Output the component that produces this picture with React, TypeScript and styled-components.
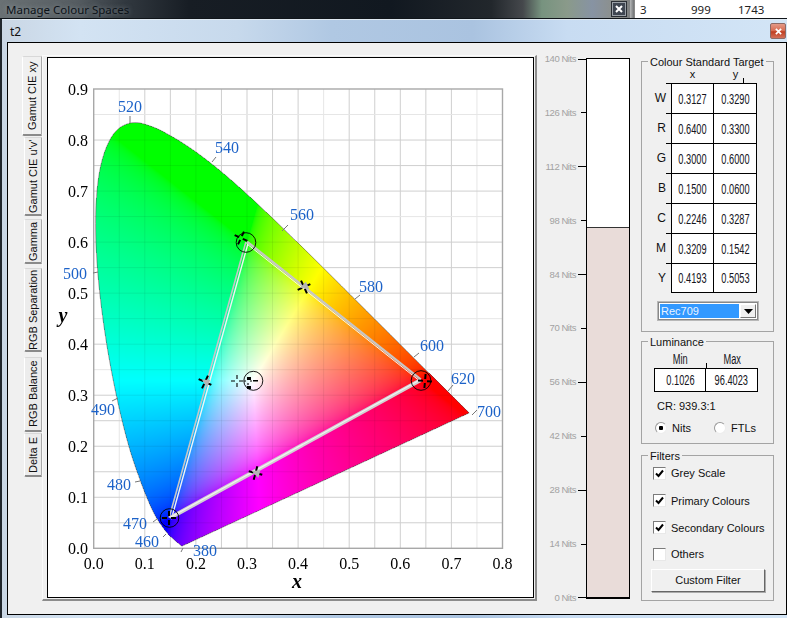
import React, { useEffect, useRef } from "react";
import styled, { createGlobalStyle } from "styled-components";

const Global = createGlobalStyle`
  html, body { margin: 0; padding: 0; background: #1a1f26; }
  body { font-family: "Liberation Sans", "Noto Sans", sans-serif; font-size: 11px; color: #111; }
`;

const Page = styled.div`
  width: 787px; height: 618px; overflow: hidden; background: #20262c;
  display: flex; flex-direction: column;
`;
const TopStrip = styled.div`
  height: 18px; display: flex; flex: none; border-bottom: 1px solid #10151a;
`;
const TopGlass = styled.div`
  width: 630px; display: flex; align-items: center; padding: 0 4px 0 6px; box-sizing: border-box;
  background: linear-gradient(90deg, #6a7174 0%, #565d62 12%, #31383f 20%, #171d24 30%, #111820 62%, #22272c 78%, #45484c 83%, #77937f 86%, #8a9a8a 90%, #8793a3 94%, #8d8f88 98%, #7e8080 100%);
`;
const TopTitle = styled.span`
  flex: 1; font-family: "Noto Sans", sans-serif; font-size: 11.5px; color: #0c1218; text-shadow: 0 0 5px rgba(190,200,205,.55);
`;
const MiniClose = styled.div`
  width: 14px; height: 14px; box-sizing: border-box; border: 1px solid #9aa0a6; background: #3f4650;
  display: flex; align-items: center; justify-content: center; box-shadow: 0 0 0 1px #2a2e33;
`;
const TopGap = styled.div`
  width: 4px; background: linear-gradient(90deg, #b5b7b8, #6f7274);
`;
const ListFragment = styled.div`
  flex: 1; background: #fff; display: grid; grid-template-columns: 51px 47px 1fr; padding-left: 5px;
  font-family: "Noto Sans", sans-serif; font-size: 11.5px; line-height: 20px; border-left: 1px solid #888; color: #222;
`;
const ListCell = styled.span`
  text-align: left; height: 18px; overflow: hidden;
`;
const Window = styled.div`
  margin-left: 2px; flex: 1; min-height: 0; display: flex; flex-direction: column; box-sizing: border-box;
  padding: 0 0 3px 5px; border-top: 1px solid #dfe9f2;
  background: linear-gradient(90deg, #c9d6e4 0%, #d3e3f3 10%, #c7d9ec 30%, #b0c8e3 42%, #aac3e0 60%, #c8dcf2 72%, #d3e5f6 100%);
`;
const TitleBar = styled.div`
  height: 22px; flex: none; display: flex; align-items: center; justify-content: space-between;
  padding: 0 1px 0 3px;
`;
const TitleText = styled.span`
  font-family: "Noto Sans", sans-serif; font-size: 12px; color: #111;
`;
const RedClose = styled.div`
  width: 16px; height: 16px; box-sizing: border-box; border: 1px solid #8d6a66; border-radius: 2px;
  background: linear-gradient(180deg, #e39a88 0%, #d86a50 50%, #bf3d20 55%, #d4705a 100%);
  display: flex; align-items: center; justify-content: center;
`;
const Client = styled.div`
  flex: 1; min-height: 0; box-sizing: border-box; border: 1px solid #000; background: #f0f0f0;
  display: flex; align-items: flex-start; padding: 13px 0 0 14px;
`;
const Tabs = styled.div`
  width: 20px; flex: none; display: flex; flex-direction: column;
`;
const Tab = styled.div<{ $h: number; $gap: number; $active?: boolean }>`
  height: ${(p) => p.$h}px; margin-bottom: ${(p) => p.$gap}px; box-sizing: border-box;
  writing-mode: vertical-rl; transform: rotate(180deg);
  display: flex; align-items: center; justify-content: center;
  font-size: 11px; white-space: nowrap; line-height: 20px;
  background: ${(p) => (p.$active ? "#f0f0f0" : "#ececec")};
  border-top: 2px solid #8a8a8a;
  border-left: 1px solid #a8a8a8;
  border-bottom: 1px solid #d8d8d8;
  border-right: 1px solid #fff;
  border-radius: 0 2px 2px 0;
  margin-left: ${(p) => (p.$active ? 0 : 2)}px;
  width: ${(p) => (p.$active ? 20 : 18)}px;
`;
const TabPane = styled.div`
  width: 495px; height: 546px; flex: none; box-sizing: border-box; margin-top: -1px;
  border-top: 1px solid #fafafa; border-left: 1px solid #fafafa;
  border-right: 2px solid #8c8c8c; border-bottom: 2px solid #8c8c8c;
  padding: 1px 1px 1px 4px;
`;
const ChartFrame = styled.div`
  position: relative; width: 487px; height: 541px; box-sizing: border-box;
  border: 1px solid #000; background: #fff;
`;
const GamutCanvas = styled.canvas`
  position: absolute; left: 0; top: 0; display: block;
`;
const ChartSvg = styled.svg`
  position: absolute; left: 0; top: 0; display: block;
`;
const TickText = styled.text`
  font-family: "Liberation Serif", serif; font-size: 16px; fill: #000;
`;
const WaveText = styled.text`
  font-family: "Liberation Serif", serif; font-size: 16px; fill: #1c62c8; text-anchor: middle;
`;
const AxisName = styled.text`
  font-family: "Liberation Serif", serif; font-size: 20px; font-weight: bold; font-style: italic; fill: #000; text-anchor: middle;
`;
const Scale = styled.div`
  width: 49px; height: 551px; flex: none; margin-top: -3px; display: flex; flex-direction: column; justify-content: space-between;
`;
const ScaleRow = styled.div`
  height: 12px; display: flex; align-items: center; justify-content: flex-end;
`;
const ScaleLabel = styled.span`
  font-family: "Liberation Sans", sans-serif; font-size: 9.5px; letter-spacing: -.45px; color: #a2a2a2; white-space: nowrap;
  line-height: 12px;
`;
const ScaleTick = styled.span<{ $long: boolean }>`
  width: ${(p) => (p.$long ? 8 : 5)}px; margin-left: ${(p) => (p.$long ? 2 : 5)}px; height: 1px; background: #000; flex: none;
`;
const Bar = styled.div`
  width: 44px; height: 541px; flex: none; margin-top: 2px; box-sizing: border-box;
  border: 1px solid #000; border-bottom-width: 2px; background: #fff;
  display: flex; flex-direction: column; justify-content: flex-end;
`;
const BarFill = styled.div`
  background: #e9dcd9; border-top: 1px solid #333; box-sizing: border-box;
`;
const Side = styled.div`
  width: 133px; flex: none; margin: 5px 0 0 11px; display: flex; flex-direction: column;
`;
const Group = styled.div<{ $h: number; $mb: number }>`
  position: relative; box-sizing: border-box; height: ${(p) => p.$h}px; margin-bottom: ${(p) => p.$mb}px;
  border: 1px solid #a4a4a4;
`;
const Legend = styled.span`
  position: absolute; left: 6px; top: -7px; padding: 0 2px; background: #f0f0f0; font-size: 11px; line-height: 14px; white-space: nowrap;
`;
const ColHeads = styled.div`
  display: flex; margin: 6px 0 0 29px; height: 15px; position: relative;
`;
const ColHead = styled.span`
  width: 43px; text-align: center; font-size: 11px; line-height: 12px;
`;
const Notch = styled.span<{ $left: number }>`
  position: absolute; left: ${(p) => p.$left}px; bottom: 0; width: 1px; height: 5px; background: #000;
`;
const Row = styled.div`
  display: flex; height: 30px; align-items: stretch;
`;
const RowLabel = styled.span`
  position: relative; width: 29px; text-align: right; padding-right: 5px; box-sizing: border-box;
  font-size: 12px; line-height: 30px;
`;
const RowNotch = styled.span`
  position: absolute; right: 0; top: 0; width: 5px; height: 1px; background: #000;
`;
const Cell = styled.div<{ $w: number; $first?: boolean; $bottom?: boolean }>`
  width: ${(p) => p.$w}px; box-sizing: border-box; background: #fff;
  border: 0 solid #000;
  border-top-width: 1px;
  border-right-width: 1px;
  border-left-width: ${(p) => (p.$first ? 1 : 0)}px;
  border-bottom-width: ${(p) => (p.$bottom ? 1 : 0)}px;
  display: flex; align-items: center; justify-content: center;
`;
const Num = styled.span`
  display: inline-block; font-size: 14px; transform: scaleX(.66); color: #15151c;
`;
const Select = styled.div`
  margin: 8px 0 0 15px; width: 102px; height: 20px; box-sizing: border-box; padding: 2px;
  background: #fff; border: 1px solid #b8b8b8; box-shadow: inset 0 0 0 1px #888; display: flex;
`;
const SelectValue = styled.span`
  flex: 1; background: #3399ff; color: #e9f3ff; font-size: 11px; line-height: 14px; padding: 0 1px; margin: 0 1px 0 0;
`;
const SelectButton = styled.span`
  width: 16px; background: #f0f0f0; border-right: 1px solid #777; border-bottom: 1px solid #777; border-left: 1px solid #fff; border-top: 1px solid #fff;
  box-sizing: border-box; display: flex; align-items: center; justify-content: center;
`;
const LumHeads = styled.div`
  position: relative; display: flex; margin: 11px 0 0 12px; height: 15px;
`;
const LumHead = styled.span`
  display: block; width: 52px; text-align: center; line-height: 12px; color: #1a1a22;
`;
const LumRow = styled.div`
  display: flex; height: 24px; margin-left: 12px;
`;
const CrText = styled.div`
  margin: 7px 0 0 15px; font-size: 11px; line-height: 14px;
`;
const RadioRow = styled.div`
  display: flex; margin: 8px 0 0 13px;
`;
const RadioItem = styled.label<{ $w: number }>`
  width: ${(p) => p.$w}px; display: flex; align-items: center; gap: 5px; font-size: 11px; line-height: 14px;
`;
const Radio = styled.span<{ $on?: boolean }>`
  width: 12px; height: 12px; box-sizing: border-box; border-radius: 50%; border: 1px solid #9a9a9a; border-right-color: #eee; border-bottom-color: #eee;
  background: radial-gradient(circle, ${(p) => (p.$on ? "#000 0 2px, #fff 2.5px" : "#fff 0 100%")});
  flex: none;
`;
const FilterList = styled.div`
  padding: 3px 0 0 11px;
`;
const FilterRow = styled.label<{ $h: number }>`
  display: flex; align-items: center; gap: 5px; height: ${(p) => p.$h}px; font-size: 11px; white-space: nowrap;
`;
const Check = styled.span`
  width: 13px; height: 13px; flex: none; box-sizing: border-box; background: #fff;
  border: 1px solid #7b7b7b; border-right-color: #e8e8e8; border-bottom-color: #e8e8e8;
  display: flex; align-items: center; justify-content: center;
`;
const FilterButton = styled.div`
  margin: 2px 0 0 9px; width: 114px; height: 23px; box-sizing: border-box; background: #f0f0f0; text-align: center;
  border: 1px solid; border-color: #fff #666 #666 #fff; box-shadow: 1px 1px 0 #aaa;
  font-size: 11px; line-height: 20px;
`;

type P = [number, number];
const LOCUS: P[] = [[.1741,.005],[.1733,.0048],[.1714,.0051],[.1689,.0069],[.1644,.0109],[.1566,.0177],[.144,.0297],[.1241,.0578],[.1096,.0868],[.0913,.1327],[.0687,.2007],[.0454,.295],[.0235,.4127],[.0082,.5384],[.0039,.6548],[.0139,.7502],[.0389,.812],[.0743,.8338],[.1142,.8262],[.1547,.8059],[.1929,.7816],[.2296,.7543],[.2658,.7243],[.3016,.6923],[.3373,.6589],[.3731,.6245],[.4087,.5896],[.4441,.5547],[.4788,.5202],[.5125,.4866],[.5448,.4544],[.5752,.4242],[.6029,.3965],[.627,.3725],[.6482,.3514],[.6658,.334],[.6915,.3083],[.7079,.292],[.719,.2809],[.7347,.2653]];
const X = (x: number) => 93.7 + 511 * x;
const Y = (y: number) => 548.3 - 510.3 * y;

const smooth = (pts: P[]): P[] => {
  const out: P[] = [];
  for (let i = 0; i < pts.length - 1; i++) {
    const p0 = pts[Math.max(i - 1, 0)];
    const p1 = pts[i];
    const p2 = pts[i + 1];
    const p3 = pts[Math.min(i + 2, pts.length - 1)];
    for (let s = 0; s < 6; s++) {
      const t = s / 6;
      const f = (a: number, b: number, c: number, d: number) =>
        0.5 * (2 * b + (c - a) * t + (2 * a - 5 * b + 4 * c - d) * t * t + (3 * b - a - 3 * c + d) * t * t * t);
      out.push([f(p0[0], p1[0], p2[0], p3[0]), f(p0[1], p1[1], p2[1], p3[1])]);
    }
  }
  out.push(pts[pts.length - 1]);
  return out;
};
const LOCUS_PX: P[] = smooth(LOCUS.map(([a, b]) => [X(a), Y(b)] as P));
const LOCUS_POINTS = LOCUS_PX.map((p) => `${p[0].toFixed(2)},${p[1].toFixed(2)}`).join(" ");

const inside = (px: number, py: number) => {
  let c = false;
  for (let i = 0, j = LOCUS_PX.length - 1; i < LOCUS_PX.length; j = i++) {
    const [xi, yi] = LOCUS_PX[i];
    const [xj, yj] = LOCUS_PX[j];
    if (yi > py !== yj > py && px < ((xj - xi) * (py - yi)) / (yj - yi) + xi) c = !c;
  }
  return c;
};
const gamma = (v: number) => 255 * (v <= 0.0031308 ? 12.92 * v : 1.055 * Math.pow(v, 1 / 2.4) - 0.055);

function Gamut({ w, h }: { w: number; h: number }) {
  const ref = useRef<HTMLCanvasElement>(null);
  useEffect(() => {
    const ctx = ref.current?.getContext("2d");
    if (!ctx) return;
    const img = ctx.createImageData(w, h);
    for (let j = 0; j < h; j++) {
      for (let i = 0; i < w; i++) {
        const sx = i + 48.5;
        const sy = j + 58.5;
        if (!inside(sx, sy)) continue;
        const x = (sx - 93.7) / 511;
        const y = (548.3 - sy) / 510.3;
        const XX = x / y;
        const ZZ = (1 - x - y) / y;
        const r = Math.max(3.2406 * XX - 1.5372 - 0.4986 * ZZ, 0);
        const g = Math.max(-0.9689 * XX + 1.8758 + 0.0415 * ZZ, 0);
        const b = Math.max(0.0557 * XX - 0.204 + 1.057 * ZZ, 0);
        const m = Math.max(r, g, b) || 1;
        const k = (i + j * w) * 4;
        img.data[k] = gamma(r / m);
        img.data[k + 1] = gamma(g / m);
        img.data[k + 2] = gamma(b / m);
        img.data[k + 3] = 255;
      }
    }
    ctx.putImageData(img, 0, 0);
  }, [w, h]);
  return <GamutCanvas ref={ref} width={w} height={h} />;
}

const WAVES: { t: string; x: number; y: number; l: number[] }[] = [
  { t: "520", x: 130, y: 112, l: [130, 116, 130, 123] },
  { t: "540", x: 227, y: 153, l: [212, 162, 216, 157] },
  { t: "560", x: 302, y: 220, l: [282, 231, 288, 225] },
  { t: "580", x: 371, y: 292, l: [355, 299, 360, 295] },
  { t: "600", x: 432, y: 351, l: [414, 357, 419, 353] },
  { t: "620", x: 463, y: 384, l: [448, 391, 453, 385] },
  { t: "700", x: 489, y: 417, l: [472, 415, 477, 410] },
  { t: "500", x: 75, y: 279, l: [93, 273, 98, 272] },
  { t: "490", x: 103, y: 415, l: [112, 401, 118, 398] },
  { t: "480", x: 119, y: 490, l: [135, 482, 140, 481] },
  { t: "470", x: 135, y: 529, l: [153, 522, 157, 519] },
  { t: "460", x: 147, y: 547, l: [163, 537, 166, 534] },
  { t: "380", x: 205, y: 556, l: [181, 552, 183, 548] },
];
const LIGHT_V = [.75, .05, .45];
const LIGHT_H = [.35, .45, .85, .65];
const GRID_X = Array.from({ length: 15 }, (_, i) => (i + 1) * 0.05);
const GRID_Y = Array.from({ length: 17 }, (_, i) => (i + 1) * 0.05);
const near = (a: number, list: number[]) => list.some((v) => Math.abs(v - a) < 0.001);

function Grid({ dim }: { dim?: boolean }) {
  const tone = (light: boolean) => (dim ? "rgba(0,0,0,.07)" : light ? "#e6e6e6" : "#cfcfcf");
  return (
    <>
      {GRID_X.map((v) => (
        <line key={v} x1={X(v)} x2={X(v)} y1={89} y2={548} stroke={tone(near(v, LIGHT_V))} strokeWidth={1} />
      ))}
      {GRID_Y.map((v) => (
        <line key={v} x1={94} x2={502} y1={Y(v)} y2={Y(v)} stroke={tone(near(v, LIGHT_H))} strokeWidth={1} />
      ))}
    </>
  );
}

function Cross({ x, y, rot, arm = 7, w = 2, diamond }: { x: number; y: number; rot: number; arm?: number; w?: number; diamond?: boolean }) {
  return (
    <g transform={`translate(${x} ${y}) rotate(${rot})`}>
      <path d={`M${-arm} 0H-2M2 0H${arm}M0 ${-arm}V-2M0 2V${arm}`} stroke="#000" strokeWidth={w} fill="none" />
      {diamond && <path d="M-4 -1L4 -4L4 4Z" fill="#b4b4b4" />}
    </g>
  );
}

function Chart() {
  return (
    <ChartFrame>
      <ChartSvg width={485} height={539} viewBox="48 58 485 539">
        <Grid />
      </ChartSvg>
      <Gamut w={485} h={539} />
      <ChartSvg width={485} height={539} viewBox="48 58 485 539">
        <clipPath id="gamut-clip"><polygon points={LOCUS_POINTS} /></clipPath>
        <g clipPath="url(#gamut-clip)"><Grid dim /></g>
        <rect x={93.7} y={89} width={408.8} height={459.3} fill="none" stroke="#a8a8a8" strokeWidth={1.4} />
        <polygon points={LOCUS_POINTS} fill="none" stroke="#555" strokeOpacity={0.7} strokeWidth={0.8} />
        {WAVES.map((w) => (
          <g key={w.t}>
            <line x1={w.l[0]} y1={w.l[1]} x2={w.l[2]} y2={w.l[3]} stroke="#777" strokeWidth={1} />
            <WaveText x={w.x} y={w.y}>{w.t}</WaveText>
          </g>
        ))}
        {[0, 1, 2, 3, 4, 5, 6, 7, 8, 9].map((n) => (
          <TickText key={n} x={88} y={Y(n / 10) + 6} textAnchor="end">{(n / 10).toFixed(1)}</TickText>
        ))}
        {[0, 1, 2, 3, 4, 5, 6, 7, 8].map((n) => (
          <TickText key={n} x={X(n / 10)} y={569} textAnchor="middle">{(n / 10).toFixed(1)}</TickText>
        ))}
        <AxisName x={297} y={588}>x</AxisName>
        <AxisName x={63} y={322}>y</AxisName>

        <line x1={X(.3) - 1.2} y1={Y(.6)} x2={X(.15) - 1.2} y2={Y(.06)} stroke="#c6c6c6" strokeWidth={1.6} />
        <line x1={X(.3) + 1.4} y1={Y(.6)} x2={X(.15) + 1.4} y2={Y(.06)} stroke="#f4f4f4" strokeWidth={1.4} />
        <line x1={X(.3)} y1={Y(.6) - 0.5} x2={X(.64)} y2={Y(.33) - 0.5} stroke="#c6c6c6" strokeWidth={2.4} />
        <line x1={X(.3) - 0.5} y1={Y(.6) + 1.5} x2={X(.64) - 0.5} y2={Y(.33) + 1.5} stroke="#f4f4f4" strokeWidth={1} />
        <line x1={X(.15)} y1={Y(.06)} x2={X(.64)} y2={Y(.33)} stroke="#d2d2d2" strokeWidth={4} />
        <line x1={X(.15)} y1={Y(.06) - 0.4} x2={X(.64)} y2={Y(.33) - 0.4} stroke="#f2f2f2" strokeWidth={1.2} />

        <circle cx={246} cy={242.5} r={9.8} fill="none" stroke="#000" strokeWidth={0.9} />
        <circle cx={421} cy={380.5} r={9.8} fill="none" stroke="#000" strokeWidth={0.9} />
        <circle cx={169.5} cy={518} r={9.3} fill="none" stroke="#000" strokeWidth={0.9} />
        <circle cx={253.3} cy={380.8} r={9.5} fill="none" stroke="#000" strokeWidth={0.9} />
        <Cross x={241} y={238} rot={25} />
        <Cross x={425} y={381} rot={5} />
        <Cross x={169} y={518} rot={0} />
        <Cross x={205} y={382} rot={25} diamond />
        <Cross x={304} y={287} rot={-25} diamond />
        <Cross x={255.5} y={473} rot={15} diamond />
        <Cross x={237} y={381} rot={0} arm={6} w={1.1} />
        <Cross x={248} y={381} rot={0} arm={4} w={1.1} />
        <path d="M247 377h4v3h-4zM247 386h4v3h-4zM253 380h5v1.4h-5z" fill="#000" />
      </ChartSvg>
    </ChartFrame>
  );
}

const NITS = [140, 126, 112, 98, 84, 70, 56, 42, 28, 14, 0];
const TARGET: [string, string, string][] = [
  ["W", "0.3127", "0.3290"],
  ["R", "0.6400", "0.3300"],
  ["G", "0.3000", "0.6000"],
  ["B", "0.1500", "0.0600"],
  ["C", "0.2246", "0.3287"],
  ["M", "0.3209", "0.1542"],
  ["Y", "0.4193", "0.5053"],
];
const TABS = [
  { t: "Gamut CIE xy", h: 80, g: 1, active: true },
  { t: "Gamut CIE u'v'", h: 79, g: 3 },
  { t: "Gamma", h: 45, g: 4 },
  { t: "RGB Separation", h: 84, g: 5 },
  { t: "RGB Balance", h: 75, g: 1 },
  { t: "Delta E", h: 44, g: 0 },
];
const FILTERS = [
  { t: "Grey Scale", on: true, h: 28 },
  { t: "Primary Colours", on: true, h: 27 },
  { t: "Secondary Colours", on: true, h: 27 },
  { t: "Others", on: false, h: 26 },
];
const MAX_NITS = 140;
const PEAK = 96.4023;

const XGlyph = ({ c = "#fff", s = 8 }: { c?: string; s?: number }) => (
  <svg width={s} height={s} viewBox="0 0 8 8"><path d="M1 1L7 7M7 1L1 7" stroke={c} strokeWidth={2} /></svg>
);

export default function App() {
  return (
    <Page>
      <Global />
      <TopStrip>
        <TopGlass>
          <TopTitle>Manage Colour Spaces</TopTitle>
          <MiniClose><XGlyph /></MiniClose>
        </TopGlass>
        <TopGap />
        <ListFragment>
          <ListCell>3</ListCell>
          <ListCell>999</ListCell>
          <ListCell>1743</ListCell>
        </ListFragment>
      </TopStrip>
      <Window>
        <TitleBar>
          <TitleText>t2</TitleText>
          <RedClose><XGlyph s={7} /></RedClose>
        </TitleBar>
        <Client>
          <Tabs>
            {TABS.map((t) => (
              <Tab key={t.t} $h={t.h} $gap={t.g} $active={t.active}>{t.t}</Tab>
            ))}
          </Tabs>
          <TabPane><Chart /></TabPane>
          <Scale>
            {NITS.map((n, i) => (
              <ScaleRow key={n}>
                <ScaleLabel>{n} Nits</ScaleLabel>
                <ScaleTick $long={i % 2 === 0} />
              </ScaleRow>
            ))}
          </Scale>
          <Bar>
            <BarFill style={{ height: `${(PEAK / MAX_NITS) * 100}%` }} />
          </Bar>
          <Side>
            <Group $h={271} $mb={9}>
              <Legend>Colour Standard Target</Legend>
              <ColHeads>
                <ColHead>x</ColHead>
                <ColHead>y</ColHead>
                <Notch $left={72} />
              </ColHeads>
              {TARGET.map((r, i) => (
                <Row key={r[0]}>
                  <RowLabel>{r[0]}<RowNotch /></RowLabel>
                  <Cell $w={43} $first $bottom={i === 6}><Num>{r[1]}</Num></Cell>
                  <Cell $w={43} $bottom={i === 6}><Num>{r[2]}</Num></Cell>
                </Row>
              ))}
              <Select>
                <SelectValue>Rec709</SelectValue>
                <SelectButton>
                  <svg width="9" height="5" viewBox="0 0 9 5"><path d="M0 0H9L4.5 5Z" fill="#000" /></svg>
                </SelectButton>
              </Select>
            </Group>
            <Group $h={103} $mb={11}>
              <Legend>Luminance</Legend>
              <LumHeads>
                <LumHead><Num>Min</Num></LumHead>
                <LumHead><Num>Max</Num></LumHead>
                <Notch $left={52} />
              </LumHeads>
              <LumRow>
                <Cell $w={52} $first $bottom><Num>0.1026</Num></Cell>
                <Cell $w={52} $bottom><Num>96.4023</Num></Cell>
              </LumRow>
              <CrText>CR: 939.3:1</CrText>
              <RadioRow>
                <RadioItem $w={59}><Radio $on />Nits</RadioItem>
                <RadioItem $w={50}><Radio />FTLs</RadioItem>
              </RadioRow>
            </Group>
            <Group $h={146} $mb={0}>
              <Legend>Filters</Legend>
              <FilterList>
                {FILTERS.map((f) => (
                  <FilterRow key={f.t} $h={f.h}>
                    <Check>
                      {f.on && <svg width="9" height="9" viewBox="0 0 9 9"><path d="M1 4.5L3.5 7L8 1.5" stroke="#000" strokeWidth={2} fill="none" /></svg>}
                    </Check>
                    {f.t}
                  </FilterRow>
                ))}
              </FilterList>
              <FilterButton>Custom Filter</FilterButton>
            </Group>
          </Side>
        </Client>
      </Window>
    </Page>
  );
}
